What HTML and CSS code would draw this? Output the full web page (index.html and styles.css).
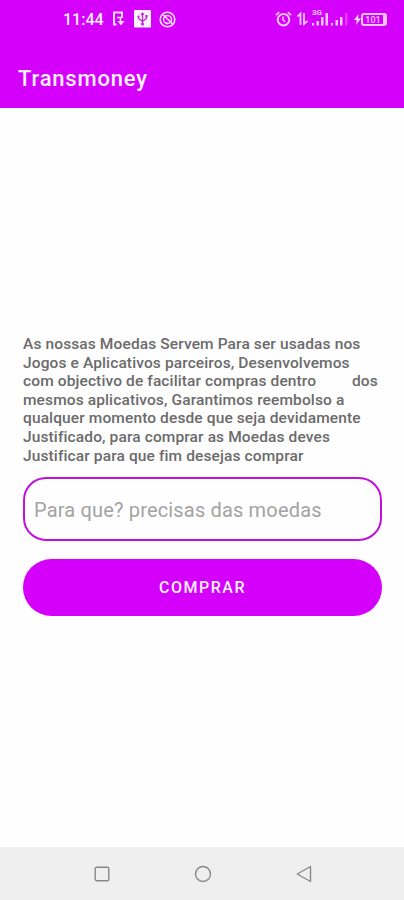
FILE: index.html
```html
<!DOCTYPE html>
<html lang="pt">
<head>
    <meta charset="utf-8">
    <title>Transmoney</title>
    <meta name="viewport" content="width=device-width, initial-scale=1">
    <link rel="stylesheet" href="styles.css">
</head>
<body>
    <header>
        <div class="status-bar">
            <div class="status-left">
                <span class="time">11:44</span>
                <svg class="icon-phone" width="13" height="18" viewBox="0 0 13 18" fill="none" stroke="#fbdcff">
                    <path d="M4.5 14.5H2V2.5H10V8" stroke-width="2"/>
                    <path d="M5 7.5H8.5V12" stroke-width="1.6"/>
                    <path d="M5.5 11H12.5L9 15.5Z" fill="#fbdcff" stroke="none"/>
                </svg>
                <svg class="icon-usb" width="17" height="18" viewBox="0 0 17 18" fill="none" stroke="#c51be6">
                    <rect width="17" height="17.5" rx="1" fill="#fff3ff" stroke="none"/>
                    <path d="M8.5 4V14M4.5 6.5V8.5L8.5 11.5L12.5 8.5V6" stroke-width="1.2"/>
                    <path d="M6.5 5L8.5 2L10.5 5Z" fill="#c51be6" stroke="none"/>
                    <circle cx="8.5" cy="14" r="1.5" fill="#c51be6" stroke="none"/>
                    <circle cx="4.5" cy="6.5" r="1.1" fill="#c51be6" stroke="none"/>
                    <path d="M11.4 5h2.2v2.2h-2.2z" fill="#c51be6" stroke="none"/>
                </svg>
                <svg class="icon-sync" width="17" height="17" viewBox="0 0 17 17" fill="none" stroke="#fbdcff">
                    <circle cx="8.5" cy="8.5" r="7.3" stroke-width="1.6"/>
                    <circle cx="8.5" cy="8.5" r="4" stroke-width="1.5"/>
                    <path d="M4.5 4L14 13.5" stroke-width="1.6"/>
                    <path d="M6.5 11.5L8.5 13" stroke-width="1.6"/>
                </svg>
            </div>
            <div class="status-right">
                <svg class="icon-alarm" width="17" height="16" viewBox="0 0 17 16" fill="none" stroke="#fbc6ff">
                    <circle cx="8.5" cy="8.7" r="5.8" stroke-width="2"/>
                    <path d="M1 4.2L4.2 1.2M16 4.2L12.8 1.2" stroke-width="1.8"/>
                    <path d="M8 5.5V9L10.3 11" stroke-width="1.5"/>
                </svg>
                <svg class="icon-data" width="11" height="14" viewBox="0 0 11 14" fill="none" stroke="#fbc6ff" stroke-width="1.8">
                    <path d="M0.5 4.5L3.5 1.5V13M7 1V12L10.5 9"/>
                </svg>
                <div class="signal">
                    <span class="network">3G</span>
                    <svg width="37" height="13" viewBox="0 0 37 13" fill="#fbc6ff">
                        <path d="M1 10h2v2.500h-2zM5.500 8h2.500v4.500h-2.500zM10 4h2.500v8.500h-2.500zM14.500 0h2.500v12.500h-2.500z"/>
                        <path d="M20 10h2v2.500h-2zM24.500 7h2.500v5.500h-2.500zM29 4h2.500v8.500h-2.500z"/>
                        <path d="M34 0h2.500v12.500h-2.500z" opacity=".3"/>
                    </svg>
                </div>
                <svg class="icon-bolt" width="7" height="11" viewBox="0 0 7 11" fill="#fbdcff">
                    <path d="M4.500 0L0 6H2.800L2 11L7 4.500H4Z"/>
                </svg>
                <div class="battery">101</div>
            </div>
        </div>
        <h1>Transmoney</h1>
    </header>
    <main>
        <p>As nossas Moedas Servem Para ser usadas nos
Jogos e Aplicativos parceiros, Desenvolvemos
com objectivo de facilitar compras dentro         dos
mesmos aplicativos, Garantimos reembolso a
qualquer momento desde que seja devidamente
Justificado, para comprar as Moedas deves
Justificar para que fim desejas comprar</p>
        <form>
            <input type="text" placeholder="Para que? precisas das moedas">
            <button type="button">COMPRAR</button>
        </form>
    </main>
    <nav>
        <svg width="16" height="16" viewBox="0 0 16 16" fill="none" stroke="#888" stroke-width="1.4">
            <rect x="1.200" y="1.200" width="13.600" height="13.600" rx="1.500"/>
        </svg>
        <svg width="18" height="18" viewBox="0 0 18 18" fill="none" stroke="#888" stroke-width="1.4">
            <circle cx="9" cy="9" r="7.500"/>
        </svg>
        <svg width="16" height="18" viewBox="0 0 16 18" fill="none" stroke="#888" stroke-width="1.4" stroke-linejoin="round">
            <path d="M1.200 9L14.500 1.500V16.500Z"/>
        </svg>
    </nav>
</body>
</html>
```
FILE: styles.css
```css
* {
    box-sizing: border-box;
}
body {
    display: flex;
    flex-direction: column;
    height: 900px;
    margin: 0;
    font-family: Roboto, sans-serif;
    background-color: #fefefe;
}
header {
    height: 108px;
    background-color: #d500fb;
    color: #fff0ff;
}
.status-bar {
    display: flex;
    justify-content: space-between;
    height: 38px;
    padding: 0 17px 0 63px;
}
.status-left,
.status-right {
    display: flex;
    align-items: center;
}
.time {
    width: 41px;
    font-size: 16px;
    font-weight: 500;
    white-space: nowrap;
}
.icon-phone {
    margin-left: 8px;
}
.icon-usb {
    margin-left: 9px;
}
.icon-sync {
    margin-left: 8px;
}
.icon-data {
    margin-left: 5px;
}
.signal {
    position: relative;
    height: 13px;
    margin-left: 3px;
}
.signal svg {
    display: block;
}
.network {
    position: absolute;
    top: -5px;
    left: 1px;
    font-size: 8px;
    line-height: 9px;
    font-weight: 700;
    color: #fbc6ff;
}
.icon-bolt {
    margin-left: 6px;
}
.battery {
    width: 26px;
    height: 13px;
    border: 2px solid #fbc6ff;
    border-right-width: 4px;
    border-radius: 3px;
    font-size: 9px;
    line-height: 10px;
    font-weight: 500;
    text-align: center;
    color: #fbc6ff;
}
h1 {
    margin: 0;
    padding: 27px 0 0 18px;
    font-size: 22px;
    line-height: 28px;
    font-weight: 500;
    letter-spacing: 0.8px;
}
main {
    flex: 1;
    padding: 227px 22px 0 23px;
}
p {
    margin: 0;
    font-size: 15.5px;
    line-height: 18.6px;
    font-weight: 500;
    letter-spacing: 0.12px;
    white-space: pre;
    color: #6b6b6b;
}
input {
    display: block;
    width: 100%;
    height: 64px;
    margin-top: 12px;
    padding: 2px 9px 0;
    border: 2px solid #c011dc;
    border-radius: 23px;
    background-color: #fefefe;
    font-family: inherit;
    font-size: 20px;
    letter-spacing: 0.17px;
}
input::placeholder {
    color: #a3a3a3;
}
button {
    display: block;
    width: 100%;
    height: 57px;
    margin-top: 18px;
    padding: 0;
    border: none;
    border-radius: 29px;
    background-color: #d500fb;
    color: #fff0ff;
    font-family: inherit;
    font-size: 16px;
    font-weight: 500;
    letter-spacing: 1.5px;
}
nav {
    display: flex;
    align-items: center;
    justify-content: space-between;
    height: 53px;
    padding: 0 92px 0 94px;
    background-color: #efefef;
}
```
